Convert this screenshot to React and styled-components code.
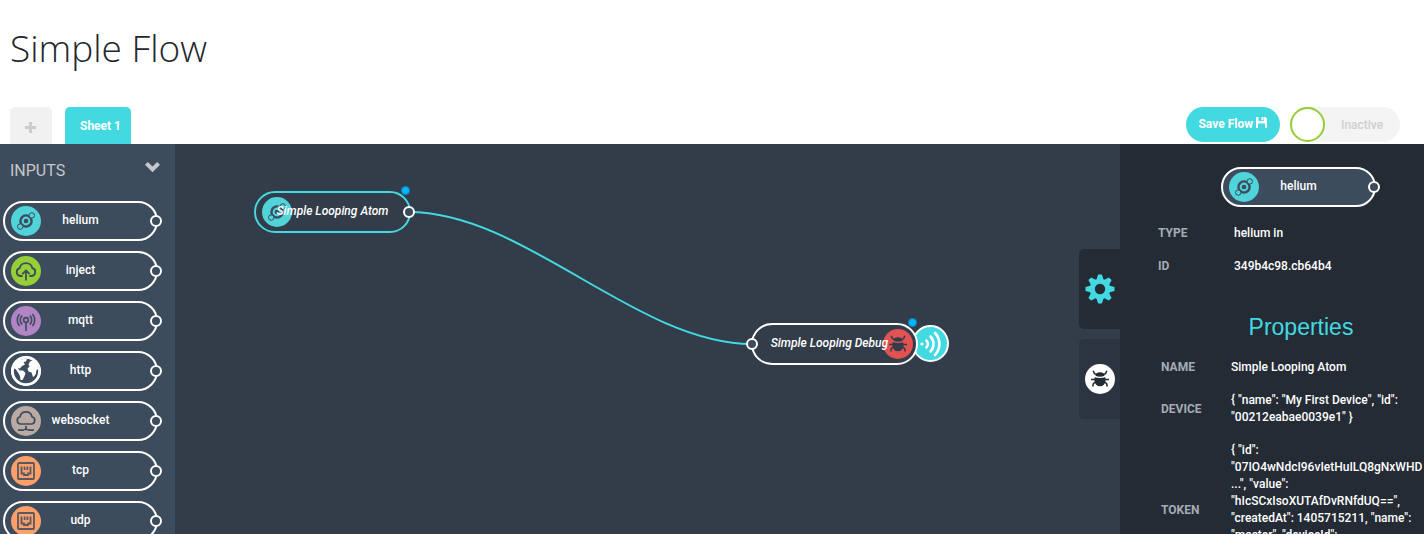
import React, { useState } from "react";
import styled, { createGlobalStyle, css } from "styled-components";

const color = {
  cyan: "#42d9e1",
  slate: "#3c4c5c",
  canvas: "#333d49",
  panel: "#242b34",
  ink: "#3c4c5c",
};

const GlobalStyle = createGlobalStyle`
  * { box-sizing: border-box; }
  body {
    margin: 0;
    background: #fff;
    font-family: Roboto, "Open Sans", sans-serif;
    font-size: 12px;
    font-weight: 500;
  }
  button, input { font: inherit; }
`;

const Page = styled.div`
  display: flex;
  flex-direction: column;
  height: 100vh;
  overflow: hidden;
`;

const Header = styled.header`
  padding: 19px 24px 0 10px;
`;

const Title = styled.h1`
  margin: 0 0 30px;
  font: 300 37px/58px "Open Sans", "Noto Sans", sans-serif;
  color: #23272b;
`;

const Bar = styled.div`
  display: flex;
  justify-content: space-between;
  height: 37px;
`;

const Group = styled.div`
  display: flex;
  align-items: ${(p) => (p.$stretch ? "stretch" : "flex-start")};
  gap: ${(p) => p.$gap}px;
`;

const SheetTab = styled.button`
  display: flex;
  align-items: center;
  justify-content: center;
  padding: 1px 10px 0 15px;
  border: 0;
  border-radius: 5px 5px 0 0;
  background: ${color.cyan};
  color: #fff;
  font-weight: 700;
  white-space: nowrap;
`;

const AddTab = styled(SheetTab)`
  width: 42px;
  padding: 4px 1px 0 0;
  background: #f1f1f1;
`;

const SaveButton = styled.button`
  display: flex;
  align-items: center;
  gap: 3px;
  height: 35px;
  padding: 0 13px 1px 12px;
  border: 0;
  border-radius: 18px;
  background: ${color.cyan};
  color: #fff;
  font-weight: 700;
  white-space: nowrap;

  svg { margin-bottom: 3px; }
`;

const Switch = styled.label`
  display: flex;
  align-items: center;
  gap: 16px;
  width: 110px;
  height: 35px;
  border-radius: 18px;
  background: #f4f4f4;
  color: #cfcfcf;
`;

const SwitchKnob = styled.input`
  appearance: none;
  width: 35px;
  height: 35px;
  margin: 0;
  border: 2px solid #96cc33;
  border-radius: 50%;
  background: #fff;
`;

const Workspace = styled.div`
  display: flex;
  flex: 1;
  min-height: 0;
  background: ${color.canvas};
`;

const Palette = styled.aside`
  width: 175px;
  flex: none;
  padding: 0 13px 0 3px;
  background: ${color.slate};
  overflow: hidden;
`;

const PaletteHeading = styled.button`
  display: flex;
  align-items: center;
  justify-content: space-between;
  width: 100%;
  height: 50px;
  margin-bottom: 7px;
  padding: 2px 1px 0 7px;
  border: 0;
  background: none;
  color: #c5c7ca;
  font-size: 16px;
  font-weight: 400;

  svg { margin-bottom: 6px; }
`;

const NodeList = styled.ul`
  display: flex;
  flex-direction: column;
  gap: 10px;
  margin: 0;
  padding: 0;
  list-style: none;
`;

const Node = styled.div`
  position: relative;
  display: flex;
  align-items: center;
  justify-content: center;
  width: 155px;
  height: 40px;
  padding-bottom: 2px;
  border: 2px solid #fff;
  border-radius: 20px;
  background: ${color.slate};
  color: #fff;
  white-space: nowrap;
`;

const FlowNode = styled(Node)`
  position: absolute;
  left: ${(p) => p.$x}px;
  top: ${(p) => p.$y}px;
  width: ${(p) => p.$w}px;
  height: 42px;
  padding: 0 ${(p) => (p.$iconRight ? 10 : 0)}px 2px 0;
  border-color: ${(p) => (p.$selected ? color.cyan : "#fff")};
  border-radius: 21px;
  background: ${color.canvas};
  font-style: italic;
`;

const NodeLabel = styled.span`
  position: relative;
`;

const Port = styled.span`
  position: absolute;
  top: 50%;
  ${(p) => (p.$left ? css`left: -7px;` : css`right: -6px;`)}
  width: 12px;
  height: 12px;
  margin-top: -6px;
  border: 2px solid #fff;
  border-radius: 50%;
  background: ${color.slate};
`;

const ChangedDot = styled.span`
  position: absolute;
  top: -7px;
  right: -1px;
  width: 9px;
  height: 9px;
  border: 1px solid #0a84bd;
  border-radius: 50%;
  background: #00b7ff;
`;

const Badge = styled.span`
  position: absolute;
  top: 50%;
  ${(p) => (p.$right ? css`right: 3px;` : css`left: 6px;`)}
  display: grid;
  place-items: center;
  width: 30px;
  height: 30px;
  margin-top: -15px;
  border-radius: 50%;
  background: ${(p) => p.$bg};
`;

const Canvas = styled.main`
  position: relative;
  flex: 1;
  min-width: 0;
  overflow: hidden;
`;

const Wires = styled.svg`
  position: absolute;
  inset: 0;
  width: 100%;
  height: 100%;
`;

const OutputToggle = styled.button`
  position: absolute;
  left: ${(p) => p.$x}px;
  top: ${(p) => p.$y}px;
  display: grid;
  place-items: center;
  width: 37px;
  height: 37px;
  padding: 0;
  border: 2px solid #fff;
  border-radius: 50%;
  background: ${color.cyan};
`;

const SideTabs = styled.nav`
  display: flex;
  flex-direction: column;
  gap: 10px;
  flex: none;
  width: 41px;
  padding-top: 105px;
`;

const SideTab = styled.button`
  display: grid;
  place-items: center;
  height: 80px;
  padding: 0;
  border: 0;
  border-radius: 5px 0 0 5px;
  background: ${(p) => (p.$active ? color.panel : "#2d3441")};
`;

const Inspector = styled.aside`
  width: 304px;
  flex: none;
  padding: 23px 0 0 38px;
  background: ${color.panel};
  color: #fff;
  overflow: hidden;
`;

const Preview = styled.div`
  padding-left: 63px;
  margin-bottom: 10px;
`;

const Fields = styled.table`
  border-collapse: collapse;
  line-height: 17px;
  margin-left: ${(p) => p.$indent || 0}px;

  th {
    min-width: ${(p) => p.$labelWidth}px;
    padding: 0;
    text-align: left;
    font-size: 12px;
    font-weight: 700;
    color: #a4abb6;
  }
`;

const Value = styled.td`
  height: ${(p) => (p.$tall ? "152px" : "auto")};
  padding: 8px 0;
  vertical-align: top;
`;

const PropertiesHeading = styled.h2`
  margin: 28px 0 8px;
  padding-left: 20px;
  font: 400 23px/32px "Liberation Sans", sans-serif;
  text-align: center;
  color: ${color.cyan};
`;

const HeliumIcon = () => (
  <svg width="20" height="20" viewBox="0 0 20 20" fill="none" stroke={color.ink}>
    <circle cx="10" cy="10" r="5.6" strokeWidth="2.4" />
    <circle cx="10" cy="10" r="2.3" fill={color.ink} stroke="none" />
    <circle cx="15.8" cy="4.4" r="2.7" fill="#50d3d9" strokeWidth="1" />
    <circle cx="4.2" cy="15.6" r="2.7" fill="#50d3d9" strokeWidth="1" />
  </svg>
);

const InjectIcon = () => (
  <svg width="22" height="22" viewBox="0 0 22 22" fill="none" stroke={color.ink} strokeWidth="1.8">
    <path d="M7.500 16H5.300A4 4 0 0 1 4.600 8.200 6.500 6.200 0 0 1 17.400 8.200 4 4 0 0 1 16.700 16H14.500" />
    <path d="M11 20.500V11M7.200 14.200 11 10.600 14.800 14.200" />
  </svg>
);

const MqttIcon = () => (
  <svg width="22" height="22" viewBox="0 0 22 22" fill="none" stroke={color.ink} strokeWidth="1.600">
    <circle cx="11" cy="10" r="2.4" />
    <path d="M11 12.4V21M7.200 14.300a5.700 5.700 0 0 1 0-8.600M14.800 14.300a5.700 5.700 0 0 0 0-8.600M4.600 16a9 9 0 0 1 0-12M17.400 16a9 9 0 0 0 0-12" />
  </svg>
);

const GlobeIcon = () => (
  <svg width="30" height="30" viewBox="0 0 30 30">
    <circle cx="15" cy="15" r="13.500" fill={color.slate} stroke="#fff" strokeWidth="2.600" />
    <path fill="#fff" d="M3 9 7.500 4.500 12 3 16 3 15 5.500 12.500 6 14 8.500 11 10 9 12.500 7 12 8.500 14.500 12 14.500 14.500 17 13.500 20 11.500 24 9.500 24 9 20 7 16.500 5 13.500 2.500 12ZM19 5.500 22 4 26 8.500 27.500 13 25.500 14 25 17.500 23.500 20 22 21 20.500 16.500 17.500 15.500 16.500 12.500 18.500 10.500 17.500 8.500Z" />
  </svg>
);

const CloudIcon = () => (
  <svg width="22" height="24" viewBox="0 0 22 24" fill="none" stroke={color.ink} strokeWidth="1.700">
    <path d="M5.200 15A3.700 3.700 0 0 1 5 7.800a6.100 6.100 0 0 1 12 0A3.700 3.700 0 0 1 16.800 15ZM11 17v3.500M3 21.200h5.800M13.200 21.200H19M8.800 20.500h4.400" />
  </svg>
);

const SocketIcon = () => (
  <svg width="18" height="18" viewBox="0 0 18 18" fill="none" stroke="#5b5762" strokeWidth="1.800">
    <rect x="1" y="1" width="16" height="16" rx="1" />
    <path d="M4.500 4.500V11.500H7V13H11V11.500H13.500V4.500M7.600 4.500v3.500M10.400 4.500v3.500" />
  </svg>
);

const BugIcon = ({ fill }) => (
  <svg width="20" height="20" viewBox="0 0 20 20" fill={fill} stroke={fill} strokeWidth="1.500">
    <path stroke="none" d="M5.500 6.700a4.500 3.500 0 0 1 9 0 10 10 0 0 1-9 0ZM4.500 8.300q5.500 1.600 11 0v3.700a5.500 5.200 0 0 1-11 0Z" />
    <path fill="none" d="M7 5.500 4.400 4.600 3.200 1.800M13 5.500l2.600-.9 1.200-2.800M5.500 10.500H1M14.500 10.500h4.500M5.500 13 3.400 14.500 2.700 17.500M14.500 13l2.100 1.500.7 3" />
  </svg>
);

const SignalIcon = () => (
  <svg width="28" height="28" viewBox="0 0 28 28" fill="none" stroke="#fff" strokeWidth="2.600" strokeLinecap="round">
    <circle cx="5" cy="14" r="1.600" fill="#fff" stroke="none" />
    <path d="M9.500 10.600a5.200 5.200 0 0 1 0 6.800M13.500 6.500a11 11 0 0 1 0 15M18 3a16 16 0 0 1 0 22" />
  </svg>
);

const GearIcon = () => (
  <svg width="30" height="30" viewBox="-15 -15 30 30" fill={color.cyan}>
    {[0, 45, 90, 135].map((a) => (
      <path key={a} transform={`rotate(${a})`} d="M-3.600-9-1.900-14.500H1.900L3.600-9V9L1.900 14.500H-1.900L-3.600 9Z" />
    ))}
    <circle r="10.300" />
    <circle r="5.200" fill={color.panel} />
  </svg>
);

const ChevronIcon = () => (
  <svg width="17" height="12" viewBox="0 0 17 12">
    <path fill="#c5c7ca" d="M1 3.800 3.800 1 8.500 5.600 13.200 1 16 3.800 8.500 11.300Z" />
  </svg>
);

const PlusIcon = () => (
  <svg width="11" height="11" viewBox="0 0 11 11">
    <path fill="#cccccc" d="M4 0h3v4h4v3H7v4H4V7H0V4h4Z" />
  </svg>
);

const FloppyIcon = () => (
  <svg width="11" height="11" viewBox="0 0 11 11">
    <path fill="#fff" fillRule="evenodd" d="M0 0H2.500V4H8V0H9.500L11 1.500V11H9V6.500H2V11H0ZM5.500 0H7.500V3.200H5.500Z" />
  </svg>
);

const inputs = [
  { name: "helium", bg: "#50d3d9", Icon: HeliumIcon },
  { name: "inject", bg: "#96cf37", Icon: InjectIcon },
  { name: "mqtt", bg: "#b184c4", Icon: MqttIcon },
  { name: "http", bg: "#ffffff", Icon: GlobeIcon },
  { name: "websocket", bg: "#b9aaa3", Icon: CloudIcon },
  { name: "tcp", bg: "#fba069", Icon: SocketIcon },
  { name: "udp", bg: "#fba069", Icon: SocketIcon },
];

const PaletteNode = ({ name, bg, Icon }) => (
  <Node>
    <Badge $bg={bg}><Icon /></Badge>
    <NodeLabel>{name}</NodeLabel>
    <Port />
  </Node>
);

export default function App() {
  const [active, setActive] = useState(false);
  return (
    <Page>
      <GlobalStyle />
      <Header>
        <Title>Simple Flow</Title>
        <Bar>
          <Group $gap={13} $stretch>
            <AddTab aria-label="Add sheet"><PlusIcon /></AddTab>
            <SheetTab>Sheet 1</SheetTab>
          </Group>
          <Group $gap={10}>
            <SaveButton>Save Flow <FloppyIcon /></SaveButton>
            <Switch>
              <SwitchKnob type="checkbox" checked={active} onChange={() => setActive(!active)} />
              Inactive
            </Switch>
          </Group>
        </Bar>
      </Header>
      <Workspace>
        <Palette>
          <PaletteHeading>INPUTS <ChevronIcon /></PaletteHeading>
          <NodeList>
            {inputs.map((n) => (
              <li key={n.name}><PaletteNode {...n} /></li>
            ))}
          </NodeList>
        </Palette>
        <Canvas>
          <Wires aria-hidden="true">
            <path d="M234 68C349 68 462 200 577 200" fill="none" stroke={color.cyan} strokeWidth="2" />
          </Wires>
          <FlowNode $x={79} $y={47} $w={157} $selected>
            <Badge $bg="#50d3d9"><HeliumIcon /></Badge>
            <NodeLabel>Simple Looping Atom</NodeLabel>
            <Port />
            <ChangedDot />
          </FlowNode>
          <OutputToggle $x={737} $y={181} aria-label="Toggle debug output"><SignalIcon /></OutputToggle>
          <FlowNode $x={576} $y={179} $w={167} $iconRight>
            <Badge $bg="#e35252" $right><BugIcon fill={color.canvas} /></Badge>
            <NodeLabel>Simple Looping Debug</NodeLabel>
            <Port $left />
            <ChangedDot />
          </FlowNode>
        </Canvas>
        <SideTabs>
          <SideTab $active aria-label="Properties"><GearIcon /></SideTab>
          <SideTab aria-label="Debug">
            <svg width="30" height="30" viewBox="0 0 30 30">
              <circle cx="15" cy="15" r="15" fill="#fff" />
              <g transform="translate(5 5)"><BugIcon fill={color.panel} /></g>
            </svg>
          </SideTab>
        </SideTabs>
        <Inspector>
          <Preview><PaletteNode {...inputs[0]} /></Preview>
          <Fields $labelWidth={76}>
            <tbody>
              <tr><th scope="row">TYPE</th><Value>helium in</Value></tr>
              <tr><th scope="row">ID</th><Value>349b4c98.cb64b4</Value></tr>
            </tbody>
          </Fields>
          <PropertiesHeading>Properties</PropertiesHeading>
          <Fields $labelWidth={70} $indent={3}>
            <tbody>
              <tr><th scope="row">NAME</th><Value>Simple Looping Atom</Value></tr>
              <tr><th scope="row">DEVICE</th><Value>{'{ "name": "My First Device", "id": "00212eabae0039e1" }'}</Value></tr>
              <tr>
                <th scope="row">TOKEN</th>
                <Value $tall>{'{ "id": "07IO4wNdcI96vIetHuILQ8gNxWHD ...", "value": "hIcSCxIsoXUTAfDvRNfdUQ==", "createdAt": 1405715211, "name": "master", "deviceId":'}</Value>
              </tr>
            </tbody>
          </Fields>
        </Inspector>
      </Workspace>
    </Page>
  );
}
